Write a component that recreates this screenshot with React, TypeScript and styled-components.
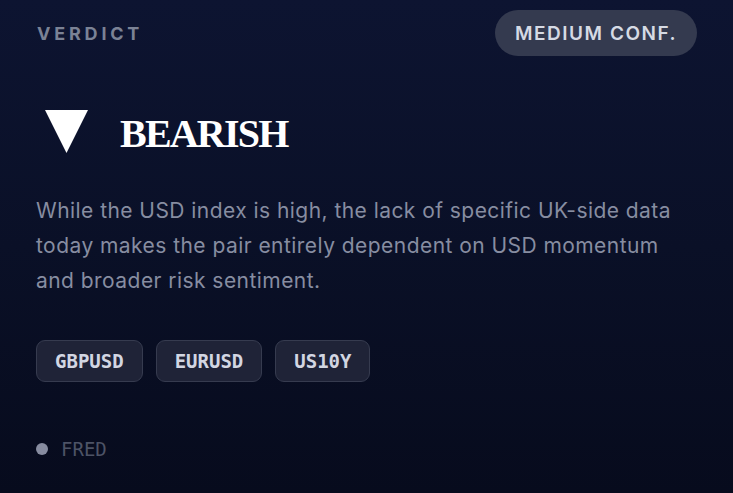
import React from "react";
import styled, { createGlobalStyle } from "styled-components";

const GlobalStyle = createGlobalStyle`
  html, body {
    margin: 0;
    padding: 0;
    background: #0a1028;
  }
  * {
    box-sizing: border-box;
  }
`;

const Card = styled.div`
  width: 733px;
  height: 493px;
  padding: 10px 36px 0 36px;
  background: linear-gradient(180deg, #0d1431 0%, #0a1027 50%, #070b1d 100%);
  font-family: Inter, "Noto Sans", sans-serif;
  display: flex;
  flex-direction: column;
`;

const Header = styled.div`
  display: flex;
  align-items: center;
  justify-content: space-between;
  height: 46px;
`;

const Label = styled.div`
  font-size: 18px;
  font-weight: 700;
  letter-spacing: 3.8px;
  color: #7b8295;
  padding-left: 1px;
`;

const Pill = styled.div`
  height: 46px;
  padding: 0 20px;
  border-radius: 23px;
  background: #343a4f;
  color: #d6dae4;
  font-size: 19px;
  font-weight: 600;
  letter-spacing: 1.5px;
  display: flex;
  align-items: center;
`;

const VerdictRow = styled.div`
  display: flex;
  align-items: center;
  gap: 32px;
  margin-top: 52px;
  padding-left: 9px;
`;

const Arrow = styled.svg`
  width: 43px;
  height: 43px;
  flex-shrink: 0;
`;

const VerdictText = styled.div`
  font-family: "Liberation Serif", "DejaVu Serif", serif;
  font-weight: 700;
  font-size: 40px;
  letter-spacing: -1.8px;
  color: #ffffff;
  line-height: 1;
  margin-top: 6px;
`;

const Summary = styled.p`
  margin: 39px 0 0 0;
  font-size: 21px;
  letter-spacing: 0.45px;
  line-height: 35px;
  color: #878da1;
  max-width: 650px;
`;

const Tags = styled.div`
  display: flex;
  gap: 13px;
  margin-top: 42px;
`;

const Tag = styled.div`
  height: 42px;
  padding: 0 18px;
  border-radius: 9px;
  border: 1px solid #363b4f;
  background: #1f2337;
  color: #d2d6e2;
  font-family: "DejaVu Sans Mono", "Liberation Mono", monospace;
  font-weight: 700;
  font-size: 19px;
  display: flex;
  align-items: center;
`;

const Source = styled.div`
  display: flex;
  align-items: center;
  gap: 13px;
  margin-top: 56px;
`;

const Dot = styled.span`
  width: 12px;
  height: 12px;
  border-radius: 50%;
  background: #878ca0;
`;

const SourceName = styled.span`
  font-family: "DejaVu Sans Mono", "Liberation Mono", monospace;
  font-size: 19px;
  color: #4d5366;
`;

const tickers = ["GBPUSD", "EURUSD", "US10Y"];

const App: React.FC = () => {
  return (
    <>
      <GlobalStyle />
      <Card>
        <Header>
          <Label>VERDICT</Label>
          <Pill>MEDIUM CONF.</Pill>
        </Header>

        <VerdictRow>
          <Arrow viewBox="0 0 43 43">
            <polygon points="0,0 43,0 21.5,43" fill="#ffffff" />
          </Arrow>
          <VerdictText>BEARISH</VerdictText>
        </VerdictRow>

        <Summary>
          While the USD index is high, the lack of specific UK-side data today
          makes the pair entirely dependent on USD momentum and broader risk
          sentiment.
        </Summary>

        <Tags>
          {tickers.map((t) => (
            <Tag key={t}>{t}</Tag>
          ))}
        </Tags>

        <Source>
          <Dot />
          <SourceName>FRED</SourceName>
        </Source>
      </Card>
    </>
  );
};

export default App;
